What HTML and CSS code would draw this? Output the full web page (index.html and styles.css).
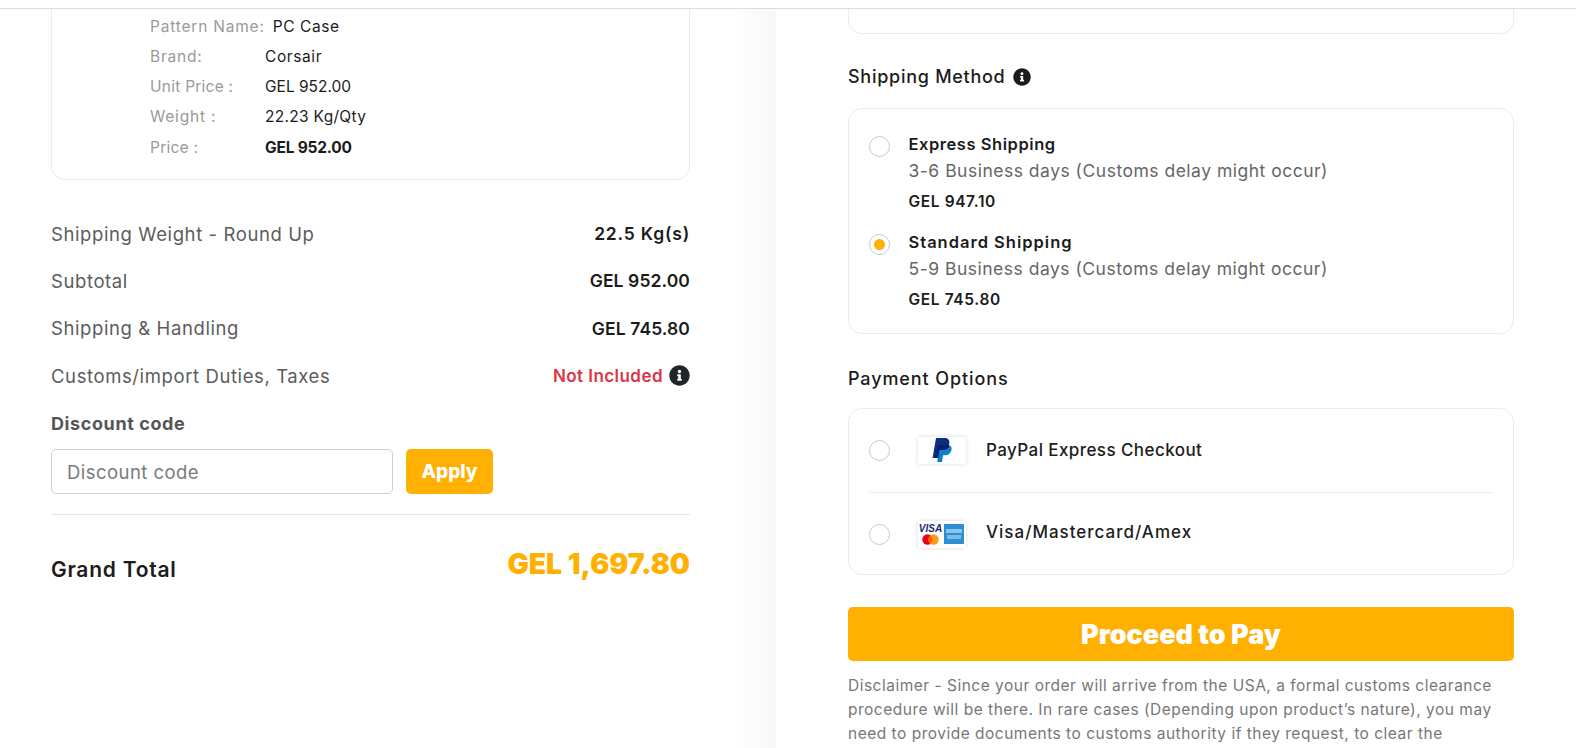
FILE: index.html
```html
<!DOCTYPE html>
<html lang="en">
<head>
<meta charset="utf-8">
<title>Checkout</title>
<link rel="stylesheet" href="styles.css">
</head>
<body>
<svg class="defs" width="0" height="0" aria-hidden="true"><defs>
<symbol id="info" viewBox="0 0 512 512"><path d="M256 8C119 8 8 119 8 256s111 248 248 248 248-111 248-248S393 8 256 8zm0 110c23.196 0 42 18.804 42 42s-18.804 42-42 42-42-18.804-42-42 18.804-42 42-42zm56 254c0 6.627-5.373 12-12 12h-88c-6.627 0-12-5.373-12-12v-24c0-6.627 5.373-12 12-12h12v-64h-12c-6.627 0-12-5.373-12-12v-24c0-6.627 5.373-12 12-12h64c6.627 0 12 5.373 12 12v100h12c6.627 0 12 5.373 12 12v24z"/></symbol>
</defs></svg>
<div class="topbar"></div>
<main class="page">
  <section class="left">
    <div class="item-card">
      <div class="spec"><span class="k">Pattern Name:</span><span class="v first">PC Case</span></div>
      <div class="spec"><span class="k fix">Brand:</span><span class="v">Corsair</span></div>
      <div class="spec"><span class="k fix tight">Unit Price :</span><span class="v num">GEL 952.00</span></div>
      <div class="spec"><span class="k fix">Weight :</span><span class="v wt">22.23 Kg/Qty</span></div>
      <div class="spec"><span class="k fix tight">Price :</span><span class="v num strong">GEL 952.00</span></div>
    </div>
    <div class="sum"><span>Shipping Weight - Round Up</span><b class="kg">22.5 Kg(s)</b></div>
    <div class="sum"><span>Subtotal</span><b>GEL 952.00</b></div>
    <div class="sum"><span>Shipping &amp; Handling</span><b>GEL 745.80</b></div>
    <div class="sum"><span>Customs/import Duties, Taxes</span><em class="ni">Not Included <svg class="ico-l"><use href="#info"/></svg></em></div>
    <div class="dc-label">Discount code</div>
    <div class="dc-row">
      <input class="dc-input" type="text" placeholder="Discount code">
      <button class="apply" type="button">Apply</button>
    </div>
    <div class="grand"><span>Grand Total</span><strong>GEL 1,697.80</strong></div>
  </section>
  <div class="gutter"></div>
  <section class="right">
    <div class="stub"></div>
    <h2 class="head ship-head">Shipping Method <svg class="ico-s"><use href="#info"/></svg></h2>
    <div class="box ship-box">
      <div class="ship">
        <span class="radio"></span>
        <div><div class="name">Express Shipping</div><div class="time">3-6 Business days (Customs delay might occur)</div><div class="cost">GEL 947.10</div></div>
      </div>
      <div class="ship">
        <span class="radio on"></span>
        <div><div class="name std">Standard Shipping</div><div class="time">5-9 Business days (Customs delay might occur)</div><div class="cost">GEL 745.80</div></div>
      </div>
    </div>
    <h2 class="head pay-head">Payment Options</h2>
    <div class="box pay-box">
      <div class="pay">
        <span class="radio"></span>
        <span class="logo">
          <svg width="22" height="25" viewBox="0 0 22 25"><path fill="#0a7fd0" d="M8 7h8.500c3 0 4.700 2 4 5-.8 3.500-3.200 5.300-6.500 5.300h-2L11 24H6.300z"/><path fill="#0f2d7d" d="M5 0h8.300c3.700 0 5.700 2 5 5.500-.8 4-3.500 6.500-7.500 6.500H8.300L7.100 20H1.600z"/><path fill="#0b1f66" d="M6.500 7h8c1.700 0 3.200.4 4 1.300-.8 2.300-3.300 3.700-7.400 3.700H8.300L7.100 20H4.200z"/></svg>
        </span>
        <span class="pay-name">PayPal Express Checkout</span>
      </div>
      <div class="pay">
        <span class="radio"></span>
        <span class="logo cards">
          <span class="c-left"><span class="visa">VISA</span>
            <svg width="17" height="11" viewBox="0 0 17 11"><circle cx="5.500" cy="5.500" r="5.200" fill="#eb001b"/><circle cx="11.500" cy="5.500" r="5.200" fill="#f79e1b"/><path d="M8.500 1.500a5 5 0 0 1 0 8 5 5 0 0 1 0-8z" fill="#ff5f00"/></svg>
          </span>
          <svg class="amex" width="20" height="20" viewBox="0 0 20 20"><rect width="20" height="20" fill="#2a8fd4"/><rect x="2" y="5" width="16" height="4" fill="#8cc6ec"/><rect x="3" y="11" width="14" height="4" fill="#7dbde8"/></svg>
        </span>
        <span class="pay-name wide">Visa/Mastercard/Amex</span>
      </div>
    </div>
    <button class="proceed" type="button">Proceed to Pay</button>
    <p class="disc">Disclaimer - Since your order will arrive from the USA, a formal customs clearance procedure will be there. In rare cases (Depending upon product’s nature), you may need to provide documents to customs authority if they request, to clear the</p>
  </section>
</main>
</body>
</html>
```
FILE: styles.css
```css
* { box-sizing: border-box; }
html, body { margin: 0; height: 748px; overflow: hidden; background: #fff; }
body { font-family: Inter, "Noto Sans", sans-serif; color: #1c1c1c; }
.defs { position: absolute; }
.topbar { height: 9px; border-bottom: 1px solid #dcdcdc; }
.page { display: flex; height: 739px; overflow: hidden; }

.left { width: 735px; padding-left: 51px; padding-right: 45px; flex: none; }
.gutter { width: 41px; flex: none; background: linear-gradient(90deg, #fff, #f7f7f7); }
.right { flex: 1; padding: 0 62px 0 72px; }

.item-card { height: 171px; border: 1px solid #ececec; border-top: 0; border-radius: 0 0 14px 14px; padding: 2px 0 0 98px; }
.spec { display: flex; align-items: center; height: 30.250px; font-size: 15.500px; }
.k { color: #9a9a9a; letter-spacing: .8px; }
.k.fix { width: 115px; }
.k.tight { letter-spacing: .25px; }
.v { color: #1c1c1c; letter-spacing: .6px; }
.v.first { margin-left: 8px; }
.v.num { letter-spacing: 0; }
.v.wt { letter-spacing: .3px; }
.v.strong { font-weight: 700; letter-spacing: -.2px; }

.sum { display: flex; justify-content: space-between; align-items: center; height: 47.300px; font-size: 18.500px; letter-spacing: .6px; color: #5c5c5c; }
.item-card + .sum { margin-top: 30px; }
.sum b { font-size: 17.500px; letter-spacing: .1px; font-weight: 600; color: #1c1c1c; }
.sum b.kg { letter-spacing: .8px; }
.ni { font-style: normal; font-weight: 600; font-size: 17px; letter-spacing: .45px; color: #dc3545; display: flex; align-items: center; gap: 6px; }
.ico-l { width: 21px; height: 21px; fill: #212529; }
.ico-s { width: 18px; height: 18px; fill: #1c1c1c; vertical-align: -3px; margin-left: 2px; }

.dc-label { font-size: 18px; letter-spacing: .6px; font-weight: 700; color: #555; margin-top: 13px; line-height: 24px; }
.dc-row { display: flex; gap: 13px; margin-top: 13px; padding-bottom: 20px; border-bottom: 1px solid #e4e4e4; }
.dc-input { width: 342px; height: 45px; border: 1px solid #cfcfcf; border-radius: 5px; padding: 0 15px; font: 400 18.500px Inter, sans-serif; letter-spacing: .45px; }
.dc-input::placeholder { color: #7a7a7a; opacity: 1; }
.apply { width: 87px; height: 45px; border: 0; border-radius: 5px; background: #ffb000; color: #fff; font: 800 19px Inter, sans-serif; }
.grand { display: flex; justify-content: space-between; align-items: flex-start; margin-top: 31px; }
.grand span { font-size: 21px; letter-spacing: .75px; font-weight: 600; margin-top: 11px; }
.grand strong { font-size: 28.300px; font-weight: 900; color: #ffb000; margin-top: 1px; }

.stub { height: 25px; border: 1px solid #ececec; border-top: 0; border-radius: 0 0 14px 14px; }
.head { margin: 0; font-size: 18px; font-weight: 500; line-height: 24px; color: #1c1c1c; letter-spacing: .73px; }
.ship-head { margin-top: 31px; }
.box { border: 1px solid #ececec; border-radius: 14px; }
.ship-box { height: 226px; margin-top: 19px; padding: 23px 20px 0; }
.ship { display: flex; gap: 18.500px; height: 98px; }
.radio { flex: none; width: 21px; height: 21px; border: 1px solid #c9c9c9; border-radius: 50%; margin-top: 4px; display: flex; align-items: center; justify-content: center; }
.radio.on::after { content: ""; width: 11px; height: 11px; border-radius: 50%; background: #ffb000; }
.name { font-size: 16.500px; font-weight: 600; line-height: 24px; letter-spacing: .55px; }
.name.std { letter-spacing: 1px; }
.time { font-size: 17.500px; color: #666; line-height: 28px; margin-top: 1px; letter-spacing: .5px; }
.cost { font-size: 15.500px; font-weight: 600; line-height: 24px; margin-top: 5px; letter-spacing: .62px; }
.pay-head { margin-top: 33px; letter-spacing: .9px; }
.pay-box { height: 167px; margin-top: 17px; padding: 0 20px; }
.pay { display: flex; align-items: center; height: 83px; }
.pay + .pay { border-top: 1px solid #ececec; }
.pay .radio { margin-top: 0; }
.logo { width: 48px; height: 27px; margin-left: 27.500px; border-radius: 2px; background: #fff; box-shadow: 0 0 4px rgba(0,0,0,.16); display: flex; align-items: center; justify-content: center; }
.logo svg { display: block; }
.cards { gap: 2px; }
.c-left { display: flex; flex-direction: column; align-items: center; }
.visa { font: italic 800 10px/10px "Liberation Sans", sans-serif; color: #1a2a6c; }
.pay-name { margin: -2px 0 0 20.500px; font-size: 17px; font-weight: 500; letter-spacing: .42px; }
.pay-name.wide { margin-top: -4px; letter-spacing: 1px; }
.proceed { display: block; width: 100%; height: 54px; margin-top: 32px; border: 0; border-radius: 5px; background: #ffb000; color: #fff; font: 900 27px Inter, sans-serif; }
.disc { margin: 13px 0 0; font-size: 15.500px; line-height: 24px; color: #777; letter-spacing: .5px; }
```
